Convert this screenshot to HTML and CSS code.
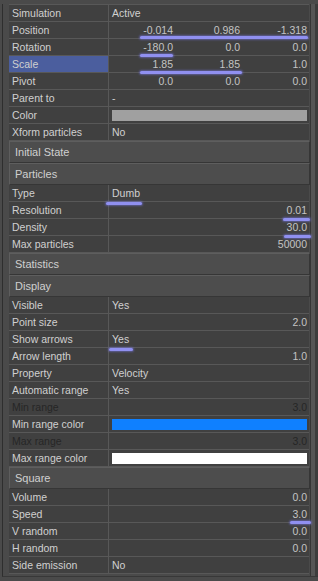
FILE: index.html
```html
<!DOCTYPE html>
<html>

<head>
  <meta charset="utf-8">
  <link rel="stylesheet" href="styles.css">
</head>

<body>
  <div class="frame">
    <div class="well">
      <div class="sheet">
        <div class="row"><div class="label">Simulation</div><div class="value">Active</div></div>
        <div class="row"><div class="label">Position</div><div class="value triple"><span>-0.014</span><span>0.986</span><span>-1.318</span></div></div>
        <div class="row"><div class="label">Rotation</div><div class="value triple"><span>-180.0</span><span>0.0</span><span>0.0</span></div></div>
        <div class="row"><div class="label selected">Scale</div><div class="value triple"><span>1.85</span><span>1.85</span><span>1.0</span></div></div>
        <div class="row"><div class="label">Pivot</div><div class="value triple"><span>0.0</span><span>0.0</span><span>0.0</span></div></div>
        <div class="row"><div class="label">Parent to</div><div class="value">-</div></div>
        <div class="row"><div class="label">Color</div><div class="value"><div class="swatch gray"></div></div></div>
        <div class="row"><div class="label">Xform particles</div><div class="value">No</div></div>

        <div class="group">Initial State</div>
        <div class="group">Particles</div>
        <div class="row"><div class="label">Type</div><div class="value">Dumb</div></div>
        <div class="row"><div class="label">Resolution</div><div class="value num">0.01</div></div>
        <div class="row"><div class="label">Density</div><div class="value num">30.0</div></div>
        <div class="row"><div class="label">Max particles</div><div class="value num">50000</div></div>

        <div class="group">Statistics</div>
        <div class="group">Display</div>
        <div class="row"><div class="label">Visible</div><div class="value">Yes</div></div>
        <div class="row"><div class="label">Point size</div><div class="value num">2.0</div></div>
        <div class="row"><div class="label">Show arrows</div><div class="value">Yes</div></div>
        <div class="row"><div class="label">Arrow length</div><div class="value num">1.0</div></div>
        <div class="row"><div class="label">Property</div><div class="value">Velocity</div></div>
        <div class="row"><div class="label">Automatic range</div><div class="value">Yes</div></div>
        <div class="row disabled"><div class="label">Min range</div><div class="value num">3.0</div></div>
        <div class="row"><div class="label">Min range color</div><div class="value"><div class="swatch blue"></div></div></div>
        <div class="row disabled"><div class="label">Max range</div><div class="value num">3.0</div></div>
        <div class="row"><div class="label">Max range color</div><div class="value"><div class="swatch white"></div></div></div>

        <div class="group">Square</div>
        <div class="row"><div class="label">Volume</div><div class="value num">0.0</div></div>
        <div class="row"><div class="label">Speed</div><div class="value num">3.0</div></div>
        <div class="row"><div class="label">V random</div><div class="value num">0.0</div></div>
        <div class="row"><div class="label">H random</div><div class="value num">0.0</div></div>
        <div class="row"><div class="label">Side emission</div><div class="value">No</div></div>
      </div>
      <div class="scrollbar"></div>
    </div>
  </div>

  <!-- pen strokes drawn over the sheet -->
  <div class="mark" style="left: 140px; top: 36px; width: 168px;"></div>
  <div class="mark" style="left: 140px; top: 54px; width: 33px;"></div>
  <div class="mark" style="left: 140px; top: 71px; width: 102px;"></div>
  <div class="mark" style="left: 106px; top: 202px; width: 36px;"></div>
  <div class="mark" style="left: 283px; top: 218px; width: 27px;"></div>
  <div class="mark" style="left: 284px; top: 235px; width: 27px;"></div>
  <div class="mark" style="left: 109px; top: 348px; width: 24px;"></div>
  <div class="mark" style="left: 290px; top: 521px; width: 21px;"></div>
</body>

</html>
```

FILE: styles.css
```css
* {
  box-sizing: border-box;
  margin: 0;
  padding: 0;
}

:root {
  --frame: #4a4a4a;
  --frame-dark: #2e2e2e;
  --cell: #404040;
  --line: #585858;
  --group: #4d4d4d;
  --text: #d0d0d0;
  --text-dim: #c4c4c4;
  --text-disabled: #262626;
  --select: #4b5e9e;
  --mark: #9090f0;
}

body {
  width: 318px;
  height: 581px;
  overflow: hidden;
  background: var(--frame);
  font-family: "Liberation Sans", Arial, sans-serif;
  font-size: 10.5px;
  color: var(--text);
  position: relative;
}

.frame {
  height: 100%;
  padding: 4px 0 0 2px;
}

.well {
  display: flex;
  height: 573px;
  border-left: 1px solid var(--frame-dark);
  border-bottom: 1px solid #383838;
  padding-left: 6px;
}

.sheet {
  width: 301px;
  border-top: 1px solid var(--line);
}

.row {
  display: flex;
  height: 17px;
  border-bottom: 1px solid var(--line);
  background: var(--cell);
  line-height: 16px;
}

.label {
  width: 100px;
  padding-left: 3px;
  border-right: 1px solid var(--line);
  white-space: nowrap;
}

.label.selected {
  background: var(--select);
}

.value {
  flex: 1;
  padding-left: 3px;
  padding-right: 2px;
  white-space: nowrap;
  color: var(--text);
}

.value.num {
  text-align: right;
  color: var(--text-dim);
}

.value.triple {
  display: grid;
  grid-template-columns: 64px 67px 67px;
  padding-left: 0;
  color: var(--text-dim);
}

.value.triple span {
  text-align: right;
}

.row.disabled .label,
.row.disabled .value {
  color: var(--text-disabled);
}

.swatch {
  height: 11px;
  margin-top: 3px;
}

.swatch.gray {
  background: #a0a0a0;
}

.swatch.blue {
  background: #0f80ff;
}

.swatch.white {
  background: #ffffff;
}

.group {
  height: 22px;
  line-height: 20px;
  padding-left: 5px;
  background: var(--group);
  border: 1px solid;
  border-color: #5e5e5e #363636 #363636 #5e5e5e;
  margin-right: -1px;
  font-size: 11px;
}

.scrollbar {
  width: 8px;
  border-left: 1px solid #353535;
  border-right: 3px solid #3c3c3c;
  background: #555555;
  margin-left: 1px;
}

.mark {
  position: absolute;
  height: 3px;
  border-radius: 2px;
  background: var(--mark);
  box-shadow: 0 0 2px 1px rgba(128, 128, 255, 0.45);
}
```
